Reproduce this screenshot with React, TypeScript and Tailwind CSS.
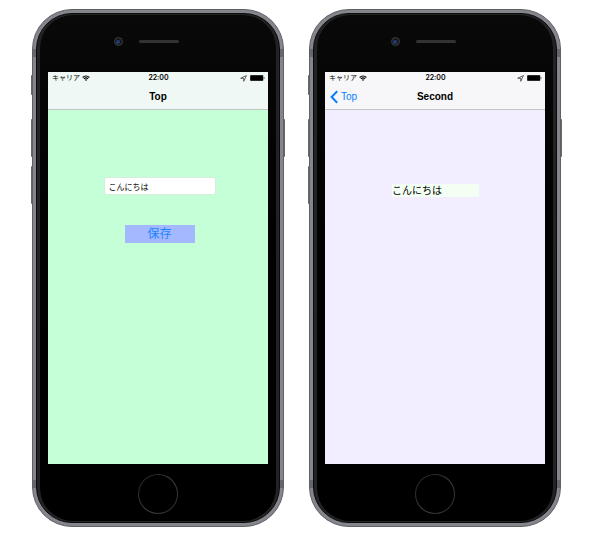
import React, { useState } from "react";

function WifiIcon() {
  return (
    <svg viewBox="0 0 16 12" className="h-[6px] w-[8px] text-black" aria-hidden="true">
      <path d="M0.5 4.2a10.8 10.8 0 0 1 15 0l-1.6 1.6a8.5 8.5 0 0 0-11.8 0z" fill="currentColor" />
      <path d="M3.1 6.9a7 7 0 0 1 9.8 0l-1.6 1.6a4.8 4.8 0 0 0-6.6 0z" fill="currentColor" />
      <path d="M5.7 9.5a3.3 3.3 0 0 1 4.6 0L8 11.9z" fill="currentColor" />
    </svg>
  );
}

function LocationIcon() {
  return (
    <svg viewBox="0 0 12 12" className="size-[7px]" aria-hidden="true">
      <path d="M11 1 1.2 5.6H6.4V10.8z" fill="none" stroke="#333" strokeWidth="1.3" strokeLinejoin="round" />
    </svg>
  );
}

function BatteryIcon() {
  return (
    <svg viewBox="0 0 15 6" className="h-[6px] w-[15px]" aria-hidden="true">
      <rect x="0" y="0" width="13.4" height="6" rx="1" fill="#555" />
      <rect x="0.5" y="0.5" width="12.4" height="5" rx="0.5" fill="#000" />
      <path d="M13.8 2v2c.9-.2.9-1.8 0-2z" fill="#111" />
    </svg>
  );
}

function StatusBar() {
  return (
    <div className="grid h-3 grid-cols-3 items-center pl-1 pr-[3px] text-[7px] leading-3 text-black">
      <div className="flex items-center gap-[2px]">
        <span>キャリア</span>
        <WifiIcon />
      </div>
      <span className="text-center font-['Inter','Liberation_Sans',sans-serif] font-semibold">22:00</span>
      <div className="flex items-center justify-end gap-[3px]">
        <LocationIcon />
        <BatteryIcon />
      </div>
    </div>
  );
}

function NavBar({ title, back }: { title: string; back?: string }) {
  return (
    <div className="grid h-[26px] grid-cols-3 items-center border-b border-black/20 px-[5px] text-[10px] leading-4">
      {back ? (
        <a href="#top" className="flex items-center gap-[3px] text-[#087eff]">
          <svg viewBox="0 0 8 14" className="h-[14px] w-2" aria-hidden="true">
            <path d="M7.2 1.2 1.6 7l5.6 5.8" fill="none" stroke="currentColor" strokeWidth="2" />
          </svg>
          {back}
        </a>
      ) : (
        <span />
      )}
      <h1 className="text-center font-bold text-black">{title}</h1>
    </div>
  );
}

const sideButton = "absolute w-[2px] rounded-sm bg-[#66676b]";

function Phone({ children }: { children: React.ReactNode }) {
  return (
    <section className="relative min-w-0 max-w-[252px] flex-1">
      <div className={`${sideButton} -left-px top-[66px] h-5`} />
      <div className={`${sideButton} -left-px top-[110px] h-[38px]`} />
      <div className={`${sideButton} -left-px top-[157px] h-[38px]`} />
      <div className={`${sideButton} -right-px top-[110px] h-[38px]`} />
      <div className="relative overflow-hidden rounded-[40px] border border-[#606167] bg-[#85868c] p-[3px]">
        <div className="absolute inset-x-0 top-[39px] h-2 bg-[#66676c]" />
        <div className="absolute inset-x-0 bottom-[38px] h-2 bg-[#66676c]" />
        <div className="relative rounded-[36px] border border-[#0b0b0c] bg-[#222325] px-[3px] py-px">
          <div className="rounded-[33px] bg-gradient-to-b from-[#090909] to-black px-2">
            <div className="flex h-[57px] items-center justify-center gap-4 pb-1 pr-6">
              <div className="flex size-[9px] items-center justify-center rounded-full border border-[#3c3e43] bg-[#15171d]">
                <div className="size-1 rounded-full bg-[#243c76]" />
              </div>
              <div className="h-[3px] w-10 rounded-full bg-[#323234]" />
            </div>
            {children}
            <div className="flex h-[57px] items-center justify-center pt-[2px]">
              <div className="size-10 rounded-full bg-gradient-to-br from-[#1d1e20] via-[#3d3e42] to-[#292a2d] p-px">
                <div className="size-full rounded-full bg-black" />
              </div>
            </div>
          </div>
        </div>
      </div>
    </section>
  );
}

export default function App() {
  const [message, setMessage] = useState("こんにちは");

  return (
    <main
      lang="ja"
      className="flex min-h-screen items-start justify-center gap-[25px] bg-white pb-4 pl-8 pr-[29px] pt-[9px] font-['Liberation_Sans','Noto_Sans_CJK_JP',sans-serif]"
    >
      <Phone>
        <div className="flex h-[392px] flex-col bg-[#c5ffd7]">
          <header className="bg-[#eff8f4]">
            <StatusBar />
            <NavBar title="Top" />
          </header>
          <form className="flex flex-col items-center gap-[30px] pl-[3px] pt-[67px]" onSubmit={(e) => e.preventDefault()}>
            <input
              type="text"
              aria-label="メッセージ"
              value={message}
              onChange={(e) => setMessage(e.target.value)}
              className="h-[18px] w-[112px] rounded-[3px] border border-[#dcebe0] bg-white px-1 text-[8px] leading-4 text-black outline-none"
            />
            <button type="submit" className="h-[18px] w-[70px] bg-[#a4b8ff] text-[12px] leading-[18px] text-[#1b84ff]">
              保存
            </button>
          </form>
        </div>
      </Phone>
      <Phone>
        <div className="flex h-[392px] flex-col bg-[#f2eeff]">
          <header className="bg-[#f7f7f9]">
            <StatusBar />
            <NavBar title="Second" back="Top" />
          </header>
          <div className="flex justify-center pl-px pt-[74px]">
            <p className="h-[13px] w-[87px] bg-[#f4fff4] text-[10px] leading-[14px] text-black">{message}</p>
          </div>
        </div>
      </Phone>
    </main>
  );
}
